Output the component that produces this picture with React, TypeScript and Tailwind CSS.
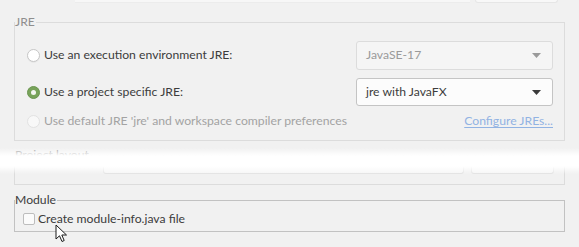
import React from "react";

function Radio({ state }: { state: "off" | "on" | "disabled" }) {
  if (state === "on") {
    return (
      <span className="w-[13px] h-[13px] rounded-full bg-[#78a35a] border border-[#6b9650] flex items-center justify-center shrink-0">
        <span className="w-[5px] h-[5px] rounded-full bg-[#f4f7f1]" />
      </span>
    );
  }
  if (state === "disabled") {
    return <span className="w-[13px] h-[13px] rounded-full bg-[#f8f8f8] border border-[#e2e2e2] shrink-0" />;
  }
  return <span className="w-[13px] h-[13px] rounded-full bg-white border border-[#c6c6c6] shadow-[0_1px_0_rgba(0,0,0,0.04)] shrink-0" />;
}

function Arrow({ color }: { color: string }) {
  return (
    <svg width="9" height="5" viewBox="0 0 9 5" className="shrink-0">
      <path d="M0 0 L9 0 L4.5 5 Z" fill={color} />
    </svg>
  );
}

export default function App() {
  return (
    <div className="w-[579px] h-[247px] overflow-hidden relative bg-[#f1f1f1] text-[12.2px] text-[#3c3c3c] font-['Lato',sans-serif]">
      {/* remnants of widgets above */}
      <div className="flex h-[3px]">
        <div className="ml-[75px] w-[395px] h-[3px] bg-[#f7f7f7] border-b border-[#ececec]" />
        <div className="ml-[5px] w-[83px] h-[3px] bg-[#f8f8f8] border-b border-x border-[#e6e6e6] rounded-b-[3px]" />
      </div>

      <div className="px-[14px] flex flex-col">
        {/* JRE group */}
        <fieldset className="mt-[11px] border border-[#dcdcdc] w-[551px]">
          <legend className="h-[16px] leading-[16px] text-[#8e8e8e] pr-[1px]">JRE</legend>
          <div className="pt-[11px] pl-[12px] pr-[11px] pb-[9px] flex flex-col">
            <div className="flex items-center h-[29px]">
              <Radio state="off" />
              <span className="ml-[4px]">Use an execution environment JRE:</span>
              <div className="ml-auto w-[197px] h-[29px] rounded-[3px] border border-[#dcdcdc] bg-[#f5f5f5] flex items-center pl-[9px] pr-[11px] text-[#9a9a9a]">
                <span>JavaSE-17</span>
                <span className="ml-auto"><Arrow color="#9a9a9a" /></span>
              </div>
            </div>
            <div className="flex items-center h-[28px] mt-[8px]">
              <Radio state="on" />
              <span className="ml-[4px]">Use a project specific JRE:</span>
              <div className="ml-auto w-[197px] h-[28px] rounded-[3px] border border-[#c4c4c4] bg-[#fcfcfc] flex items-center pl-[9px] pr-[11px]">
                <span>jre with JavaFX</span>
                <span className="ml-auto"><Arrow color="#3a3a3a" /></span>
              </div>
            </div>
            <div className="flex items-center h-[20px] mt-[5px]">
              <Radio state="disabled" />
              <span className="ml-[4px] text-[#a3a3a3]">Use default JRE 'jre' and workspace compiler preferences</span>
              <span className="ml-auto text-[#91b3e3] underline underline-offset-2">Configure JREs...</span>
            </div>
          </div>
        </fieldset>

        {/* Project layout group */}
        <fieldset className="mt-[6px] border border-[#dcdcdc] w-[551px]">
          <legend className="h-[16px] leading-[16px] text-[#9a9a9a] pr-[1px]">Project layout</legend>
          <div className="flex pb-[10px]">
            <div className="ml-[88px] w-[361px] h-[11px] bg-[#f6f6f6] border-x border-b border-[#e2e2e2] rounded-b-[3px]" />
            <div className="ml-[7px] w-[83px] h-[11px] bg-[#f6f6f6] border-x border-b border-[#e2e2e2] rounded-b-[3px]" />
          </div>
        </fieldset>

        {/* Module group */}
        <fieldset className="mt-[7px] border border-[#c2c2c2] w-[551px]">
          <legend className="h-[16px] leading-[16px] text-[#3c3c3c] pr-[1px]">Module</legend>
          <div className="mt-[1px] h-[20px] flex items-center pl-[8px] pb-0 mb-[2px]">
            <span className="w-[12px] h-[12px] rounded-[2px] border border-[#bdbdbd] bg-[#fbfbfb] shrink-0" />
            <span className="ml-[3px]">Create module-info.java file</span>
          </div>
        </fieldset>
      </div>

      {/* fading white band overlay */}
      <div className="absolute left-0 right-0 top-[148px] h-[26px] bg-[linear-gradient(to_bottom,rgba(255,255,255,0)_0%,#ffffff_30%,#ffffff_70%,rgba(255,255,255,0)_100%)]" />

      {/* mouse cursor */}
      <svg className="absolute left-[55px] top-[224px]" width="13" height="19" viewBox="0 0 13 19">
        <path d="M1 1 L1 15 L4.5 11.8 L7 17.5 L9.2 16.5 L6.8 11 L11.5 11 Z" fill="#ffffff" stroke="#1a1a1a" strokeWidth="1" strokeLinejoin="round" />
      </svg>
    </div>
  );
}
